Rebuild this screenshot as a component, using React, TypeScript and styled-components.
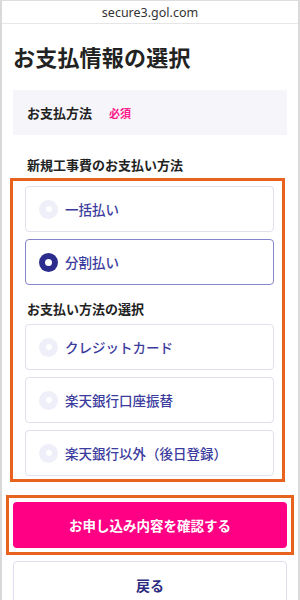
import React from 'react';
import styled, { createGlobalStyle } from 'styled-components';

const GlobalStyle = createGlobalStyle`
  html, body {
    margin: 0;
    padding: 0;
    background: #ffffff;
  }
  body {
    font-family: "Noto Sans CJK JP", "Noto Sans", sans-serif;
  }
`;

const Frame = styled.div`
  width: 300px;
  height: 600px;
  box-sizing: border-box;
  border-left: 2px solid #d9d9d9;
  border-right: 2px solid #d9d9d9;
  border-top: 1px solid #dedede;
  overflow: hidden;
  background: #ffffff;
`;

const UrlBar = styled.div`
  height: 22px;
  display: flex;
  align-items: center;
  justify-content: center;
  border-bottom: 1px solid #e6e6e6;
  font-family: "Noto Sans", "Liberation Sans", sans-serif;
  font-size: 12.5px;
  color: #333333;
`;

const Content = styled.div`
  padding: 0 11px;
  display: flex;
  flex-direction: column;
`;

const Title = styled.h1`
  margin: 17px 0 0 0;
  font-size: 22px;
  line-height: 30px;
  font-weight: 700;
  color: #222222;
  letter-spacing: 0.2px;
`;

const Panel = styled.div`
  margin-top: 19px;
  height: 45px;
  width: 274px;
  box-sizing: border-box;
  background: #f6f6fa;
  display: flex;
  align-items: center;
  gap: 17px;
  padding-left: 14px;
`;

const PanelLabel = styled.span`
  font-size: 13px;
  font-weight: 700;
  color: #222222;
`;

const Required = styled.span`
  font-size: 11px;
  font-weight: 700;
  color: #ff1a8c;
`;

const SubHeading = styled.h2<{ $inset?: number }>`
  margin: 0;
  padding-left: ${(p) => p.$inset ?? 0}px;
  font-size: 13px;
  line-height: 20px;
  font-weight: 700;
  color: #222222;
`;

const FirstHeading = styled(SubHeading)`
  margin-top: 20px;
  padding-left: 14px;
`;

const Highlight = styled.div`
  margin: 3px 0 0 -3px;
  width: 275px;
  box-sizing: border-box;
  border: 3px solid #e8641e;
  padding: 5px 8px 3px 12px;
  display: flex;
  flex-direction: column;
  gap: 7px;
`;

const SectionHeading = styled(SubHeading)`
  margin: 7px 0 -2px 0;
  padding-left: 2px;
`;

const Option = styled.label<{ $checked?: boolean }>`
  height: 46px;
  box-sizing: border-box;
  border: ${(p) => (p.$checked ? '1.5px solid #8585cc' : '1.5px solid #e0e0ee')};
  border-radius: 4px;
  display: flex;
  align-items: center;
  gap: 7px;
  padding-left: 13px;
  background: #ffffff;
`;

const Radio = styled.span<{ $checked?: boolean }>`
  width: 19px;
  height: 19px;
  border-radius: 50%;
  background: ${(p) => (p.$checked ? '#2c2c8c' : '#efeff9')};
  display: flex;
  align-items: center;
  justify-content: center;
  &::after {
    content: '';
    width: ${(p) => (p.$checked ? 7 : 6)}px;
    height: ${(p) => (p.$checked ? 7 : 6)}px;
    border-radius: 50%;
    background: #ffffff;
  }
`;

const OptionText = styled.span`
  font-size: 13.5px;
  font-weight: 500;
  color: #3c3c9e;
`;

const ButtonHighlight = styled.div`
  margin: 13px 0 0 -7px;
  width: 288px;
  box-sizing: border-box;
  border: 3px solid #e8641e;
  padding: 4px 4px 4px 4px;
`;

const PrimaryButton = styled.button`
  width: 274px;
  height: 46px;
  border: none;
  border-radius: 4px;
  background: #ff0084;
  color: #ffffff;
  font-family: inherit;
  font-size: 13.5px;
  font-weight: 700;
  display: block;
`;

const BackButton = styled.button`
  margin-top: 6px;
  width: 274px;
  height: 48px;
  box-sizing: border-box;
  border: 1.5px solid #dedef3;
  border-radius: 4px;
  background: #ffffff;
  color: #2b2b80;
  font-family: inherit;
  font-size: 14px;
  font-weight: 700;
`;

const workOptions = [
  { label: '一括払い', checked: false },
  { label: '分割払い', checked: true },
];

const methodOptions = [
  { label: 'クレジットカード', checked: false },
  { label: '楽天銀行口座振替', checked: false },
  { label: '楽天銀行以外（後日登録）', checked: false },
];

export default function App() {
  return (
    <>
      <GlobalStyle />
      <Frame>
        <UrlBar>secure3.gol.com</UrlBar>
        <Content>
          <Title>お支払情報の選択</Title>
          <Panel>
            <PanelLabel>お支払方法</PanelLabel>
            <Required>必須</Required>
          </Panel>
          <FirstHeading>新規工事費のお支払い方法</FirstHeading>
          <Highlight>
            {workOptions.map((o) => (
              <Option key={o.label} $checked={o.checked}>
                <Radio $checked={o.checked} />
                <OptionText>{o.label}</OptionText>
              </Option>
            ))}
            <SectionHeading>お支払い方法の選択</SectionHeading>
            {methodOptions.map((o) => (
              <Option key={o.label} $checked={o.checked}>
                <Radio $checked={o.checked} />
                <OptionText>{o.label}</OptionText>
              </Option>
            ))}
          </Highlight>
          <ButtonHighlight>
            <PrimaryButton>お申し込み内容を確認する</PrimaryButton>
          </ButtonHighlight>
          <BackButton>戻る</BackButton>
        </Content>
      </Frame>
    </>
  );
}
